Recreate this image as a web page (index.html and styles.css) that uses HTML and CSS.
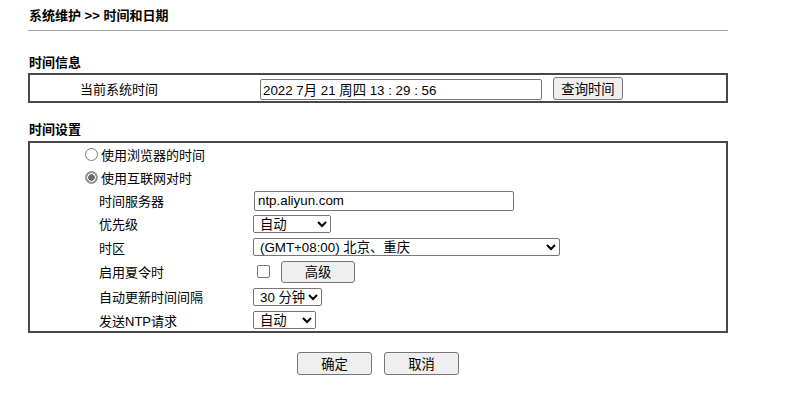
FILE: index.html
```html
<!DOCTYPE html>
<html lang="zh-CN">
<head>
<meta charset="utf-8">
<title>时间和日期</title>
<link rel="stylesheet" href="styles.css">
</head>
<body>
<div class="page">
  <div class="title">系统维护 &gt;&gt; 时间和日期</div>
  <div class="rule"></div>

  <div class="section-title">时间信息</div>
  <div class="box info">
    <div class="info-label">当前系统时间</div>
    <input class="time-input" type="text" value="2022 7月 21 周四 13 : 29 : 56">
    <button class="btn query">查询时间</button>
  </div>

  <div class="section-title second">时间设置</div>
  <div class="box settings">
    <div class="radio-row r1"><span class="radio"></span><span>使用浏览器的时间</span></div>
    <div class="radio-row r2"><span class="radio checked"></span><span>使用互联网对时</span></div>
    <div class="row r3"><span class="lbl">时间服务器</span><input class="ntp" type="text" value="ntp.aliyun.com"></div>
    <div class="row r4"><span class="lbl">优先级</span><select class="sel prio"><option>自动</option></select></div>
    <div class="row r5"><span class="lbl">时区</span><select class="sel tz"><option>(GMT+08:00) 北京、重庆</option></select></div>
    <div class="row r6"><span class="lbl">启用夏令时</span><span class="check"></span><button class="btn adv">高级</button></div>
    <div class="row r7"><span class="lbl">自动更新时间间隔</span><select class="sel interval"><option>30 分钟</option></select></div>
    <div class="row r8"><span class="lbl">发送NTP请求</span><select class="sel ntpreq"><option>自动</option></select></div>
  </div>

  <div class="actions">
    <button class="btn act">确定</button>
    <button class="btn act">取消</button>
  </div>
</div>
</body>
</html>
```
FILE: styles.css
```css
html, body {
  margin: 0;
  padding: 0;
  background: #ffffff;
}
body {
  font-family: "Liberation Sans", "Noto Sans CJK SC", sans-serif;
  font-size: 13px;
  color: #000;
}
.page {
  padding: 8px 0 0 28px;
  width: 700px;
}
.title {
  font-weight: bold;
  line-height: 16px;
  height: 16px;
  padding-left: 1px;
}
.rule {
  margin-top: 6px;
  height: 1px;
  background: #a0a0a0;
}
.section-title {
  margin-top: 24px;
  font-weight: bold;
  line-height: 16px;
  height: 16px;
  padding-left: 1px;
}
.section-title.second {
  margin-top: 19px;
}
.box {
  border: 2px solid #484848;
  box-sizing: border-box;
  width: 700px;
}
.info {
  margin-top: 2px;
  height: 30px;
  display: flex;
  align-items: center;
}
.info-label {
  flex: 0 0 230px;
  box-sizing: border-box;
  padding-left: 50px;
}
input, select, button {
  font-family: "Liberation Sans", "Noto Sans CJK SC", sans-serif;
  font-size: 13.33px;
  color: #000;
  margin: 0;
}
.time-input {
  width: 282px;
  height: 21px;
  box-sizing: border-box;
  border: 1px solid #767676;
  border-radius: 2px;
  padding: 0 2px;
  margin-top: 2px;
}
.btn {
  background: #efefef;
  border: 1px solid #767676;
  border-radius: 3px;
  box-sizing: border-box;
  padding: 0;
  text-align: center;
}
.query {
  width: 70px;
  height: 23px;
  margin-left: 11px;
}
.settings {
  margin-top: 3px;
  padding-top: 0;
}
.radio-row, .row {
  display: flex;
  align-items: center;
}
.radio-row {
  padding-left: 55px;
  height: 23px;
}
.radio {
  width: 13px;
  height: 13px;
  box-sizing: border-box;
  border: 1px solid #7a7a7a;
  border-radius: 50%;
  background: #fff;
  margin-right: 3px;
}
.radio.checked {
  border-color: #8e8e8e;
  background: radial-gradient(circle, #6a6a6a 0 3px, #ffffff 3.5px 4px, #9a9a9a 4.5px);
}
.row {
  padding-left: 69px;
}
.lbl {
  flex: 0 0 154px;
}
.r3 { height: 23px; }
.r4 { height: 23px; }
.r5 { height: 24px; }
.r6 { height: 25px; }
.r7 { height: 25px; }
.r8 { height: 22px; }
.ntp {
  width: 260px;
  height: 20px;
  box-sizing: border-box;
  border: 1px solid #767676;
  border-radius: 2px;
  padding: 0 3px;
  margin-left: 1px;
}
.sel {
  height: 18px;
  box-sizing: border-box;
  border: 1px solid #767676;
  border-radius: 2px;
  background: #fff;
  padding: 0 0 0 2px;
}
.prio { width: 78px; }
.tz { width: 307px; }
.interval { width: 69px; }
.ntpreq { width: 63px; }
.check {
  width: 13px;
  height: 13px;
  box-sizing: border-box;
  border: 1px solid #767676;
  border-radius: 2px;
  background: #fff;
  margin-left: 4px;
}
.adv {
  width: 74px;
  height: 22px;
  margin-left: 11px;
}
.actions {
  margin-top: 19px;
  display: flex;
  justify-content: center;
  gap: 12px;
}
.act {
  width: 75px;
  height: 23px;
}
```
